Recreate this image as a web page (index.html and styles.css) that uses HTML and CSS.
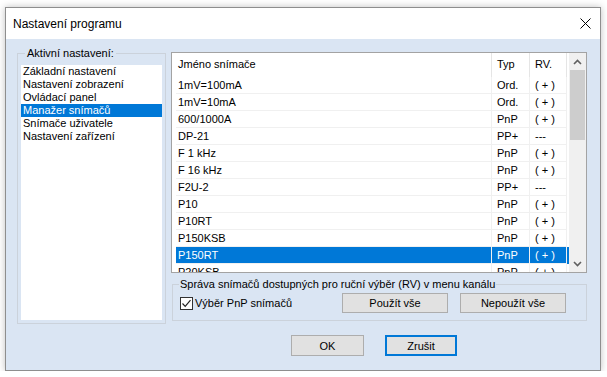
FILE: index.html
```html
<!DOCTYPE html>
<html lang="cs">
<head>
  <meta charset="UTF-8">
  <title>Nastavení programu</title>
  <link rel="stylesheet" href="styles.css">
</head>
<body>

  <div class="window">
    <div class="titlebar">
      <span class="title">Nastavení programu</span>
      <svg class="close" width="11" height="11" viewBox="0 0 11 11">
        <path d="M0.5 0.5 L10.5 10.5 M10.5 0.5 L0.5 10.5" stroke="#000" stroke-width="1" fill="none"/>
      </svg>
    </div>

    <div class="client">
      <div class="main">

        <!-- levý seznam sekcí -->
        <fieldset class="group settings">
          <legend>Aktivní nastavení:</legend>
          <ul class="listbox">
            <li>Základní nastavení</li>
            <li>Nastavení zobrazení</li>
            <li>Ovládací panel</li>
            <li class="selected">Manažer snímačů</li>
            <li>Snímače uživatele</li>
            <li>Nastavení zařízení</li>
          </ul>
        </fieldset>

        <div class="right">
          <!-- tabulka snímačů -->
          <div class="listview">
            <div class="lv-body">
              <div class="lv-row lv-head">
                <div class="cell name">Jméno snímače</div>
                <div class="cell">Typ</div>
                <div class="cell rv">RV.</div>
              </div>
              <div class="lv-row"><div class="cell name">1mV=100mA</div><div class="cell">Ord.</div><div class="cell rv">( + )</div></div>
              <div class="lv-row"><div class="cell name">1mV=10mA</div><div class="cell">Ord.</div><div class="cell rv">( + )</div></div>
              <div class="lv-row"><div class="cell name">600/1000A</div><div class="cell">PnP</div><div class="cell rv">( + )</div></div>
              <div class="lv-row"><div class="cell name">DP-21</div><div class="cell">PP+</div><div class="cell rv">---</div></div>
              <div class="lv-row"><div class="cell name">F 1 kHz</div><div class="cell">PnP</div><div class="cell rv">( + )</div></div>
              <div class="lv-row"><div class="cell name">F 16 kHz</div><div class="cell">PnP</div><div class="cell rv">( + )</div></div>
              <div class="lv-row"><div class="cell name">F2U-2</div><div class="cell">PP+</div><div class="cell rv">---</div></div>
              <div class="lv-row"><div class="cell name">P10</div><div class="cell">PnP</div><div class="cell rv">( + )</div></div>
              <div class="lv-row"><div class="cell name">P10RT</div><div class="cell">PnP</div><div class="cell rv">( + )</div></div>
              <div class="lv-row"><div class="cell name">P150KSB</div><div class="cell">PnP</div><div class="cell rv">( + )</div></div>
              <div class="lv-row selected"><div class="cell name">P150RT</div><div class="cell">PnP</div><div class="cell rv">( + )</div></div>
              <div class="lv-row"><div class="cell name">P20KSB</div><div class="cell">PnP</div><div class="cell rv">( + )</div></div>
            </div>
            <div class="scrollbar">
              <div class="sb-btn">
                <svg width="9" height="6" viewBox="0 0 9 6"><path d="M1 5 L4.5 1.5 L8 5" stroke="#606060" stroke-width="1.6" fill="none"/></svg>
              </div>
              <div class="sb-track"><div class="sb-thumb"></div></div>
              <div class="sb-btn">
                <svg width="9" height="6" viewBox="0 0 9 6"><path d="M1 1 L4.5 4.5 L8 1" stroke="#606060" stroke-width="1.6" fill="none"/></svg>
              </div>
            </div>
          </div>

          <fieldset class="group sensors">
            <legend>Správa snímačů dostupných pro ruční výběr (RV) v menu kanálu</legend>
            <div class="sensors-row">
              <label class="check">
                <span class="box">
                  <svg width="11" height="11" viewBox="0 0 11 11"><path d="M1.5 5.5 L4.2 8.3 L9.5 2.2" stroke="#222" stroke-width="1.2" fill="none"/></svg>
                </span>
                Výběr PnP snímačů
              </label>
              <div class="actions">
                <button class="btn wide">Použít vše</button>
                <button class="btn wide">Nepoužít vše</button>
              </div>
            </div>
          </fieldset>
        </div>

      </div>

      <div class="footer">
        <button class="btn small">OK</button>
        <button class="btn small default">Zrušit</button>
      </div>
    </div>
  </div>

</body>
</html>
```

FILE: styles.css
```css
* {
  box-sizing: border-box;
}

body {
  margin: 0;
  background-color: #fff;
  font-family: 'Liberation Sans', Arial, sans-serif;
  font-size: 11px;
  color: #000;
}

.window {
  width: 596px;
  margin: 7px 0 0 5px;
  border: 1px solid #8e8e8e;
  box-shadow: 0 0 7px rgba(0,0,0,0.25);
}

.titlebar {
  height: 31px;
  background: #fff;
  display: flex;
  align-items: center;
  justify-content: space-between;
  padding: 0 9px 0 7px;
}

.title {
  font-size: 12px;
}

.client {
  background-color: #dae5f3;
  padding: 7px 13px 0 11px;
}

.main {
  display: flex;
  align-items: flex-start;
  gap: 5px;
}

.group {
  margin: 0;
  border: 1px solid #cbd2db;
  min-width: 0;
}

.group legend {
  line-height: 14px;
  padding: 0 2px;
}

.settings {
  width: 149px;
  padding: 5px 3px 3px 3px;
}

.settings legend {
  margin-left: 4px;
}

.listbox {
  list-style: none;
  margin: 0;
  padding: 0;
  height: 255px;
  background: #fff;
}

.listbox li {
  line-height: 13px;
  padding-left: 2px;
  white-space: nowrap;
}

.listbox li.selected {
  background-color: #0078d7;
  color: #fff;
}

.right {
  width: 416px;
  margin-top: 6px;
}

.listview {
  height: 221px;
  border: 1px solid #a3a3a3;
  background: #fff;
  display: flex;
}

.lv-body {
  flex: 1;
  padding-left: 4px;
  overflow: hidden;
}

.lv-row {
  display: grid;
  grid-template-columns: 315px 38px 38px;
  height: 17px;
  line-height: 16px;
  white-space: nowrap;
}

.lv-row .cell {
  border-bottom: 1px solid #f0f0f0;
  border-left: 1px solid #f0f0f0;
  padding-left: 5px;
  overflow: hidden;
}

.lv-row .cell.name {
  border-left: none;
  padding-left: 2px;
}

.lv-row .cell.rv {
  border-right: 1px solid #f0f0f0;
}

.lv-head {
  height: 24px;
  line-height: 23px;
}

.lv-head .cell {
  border-bottom: none;
  border-left-color: #e5e5e5;
}

.lv-head .cell.rv {
  border-right-color: #e5e5e5;
}

.lv-row.selected {
  background-color: #0078d7;
  color: #fff;
}

.scrollbar {
  width: 17px;
  background: #f0f0f0;
  display: flex;
  flex-direction: column;
}

.sb-btn {
  height: 17px;
  display: flex;
  align-items: center;
  justify-content: center;
}

.sb-track {
  flex: 1;
}

.sb-thumb {
  height: 70px;
  margin: 0 1px;
  background: #cdcdcd;
}

.sensors {
  margin: 4px 0 0 1px;
  padding: 2px 20px 7px 7px;
}

.sensors legend {
  margin-left: -1px;
  padding: 0 1px;
}

.sensors-row {
  display: flex;
  align-items: center;
  height: 20px;
}

.check {
  display: flex;
  align-items: center;
  gap: 2px;
}

.box {
  width: 13px;
  height: 13px;
  border: 1px solid #333;
  background: #fff;
  display: flex;
  align-items: center;
  justify-content: center;
}

.actions {
  margin-left: auto;
  display: flex;
  gap: 12px;
}

.btn {
  font-family: inherit;
  font-size: 11px;
  color: #000;
  background-color: #e1e1e1;
  border: 1px solid #adadad;
  padding: 0;
  height: 20px;
}

.btn.wide {
  width: 106px;
}

.footer {
  display: flex;
  gap: 21px;
  padding: 11px 0 14px 274px;
}

.btn.small {
  width: 73px;
  height: 21px;
}

.btn.default {
  width: 72px;
  border: 2px solid #0078d7;
}
```
